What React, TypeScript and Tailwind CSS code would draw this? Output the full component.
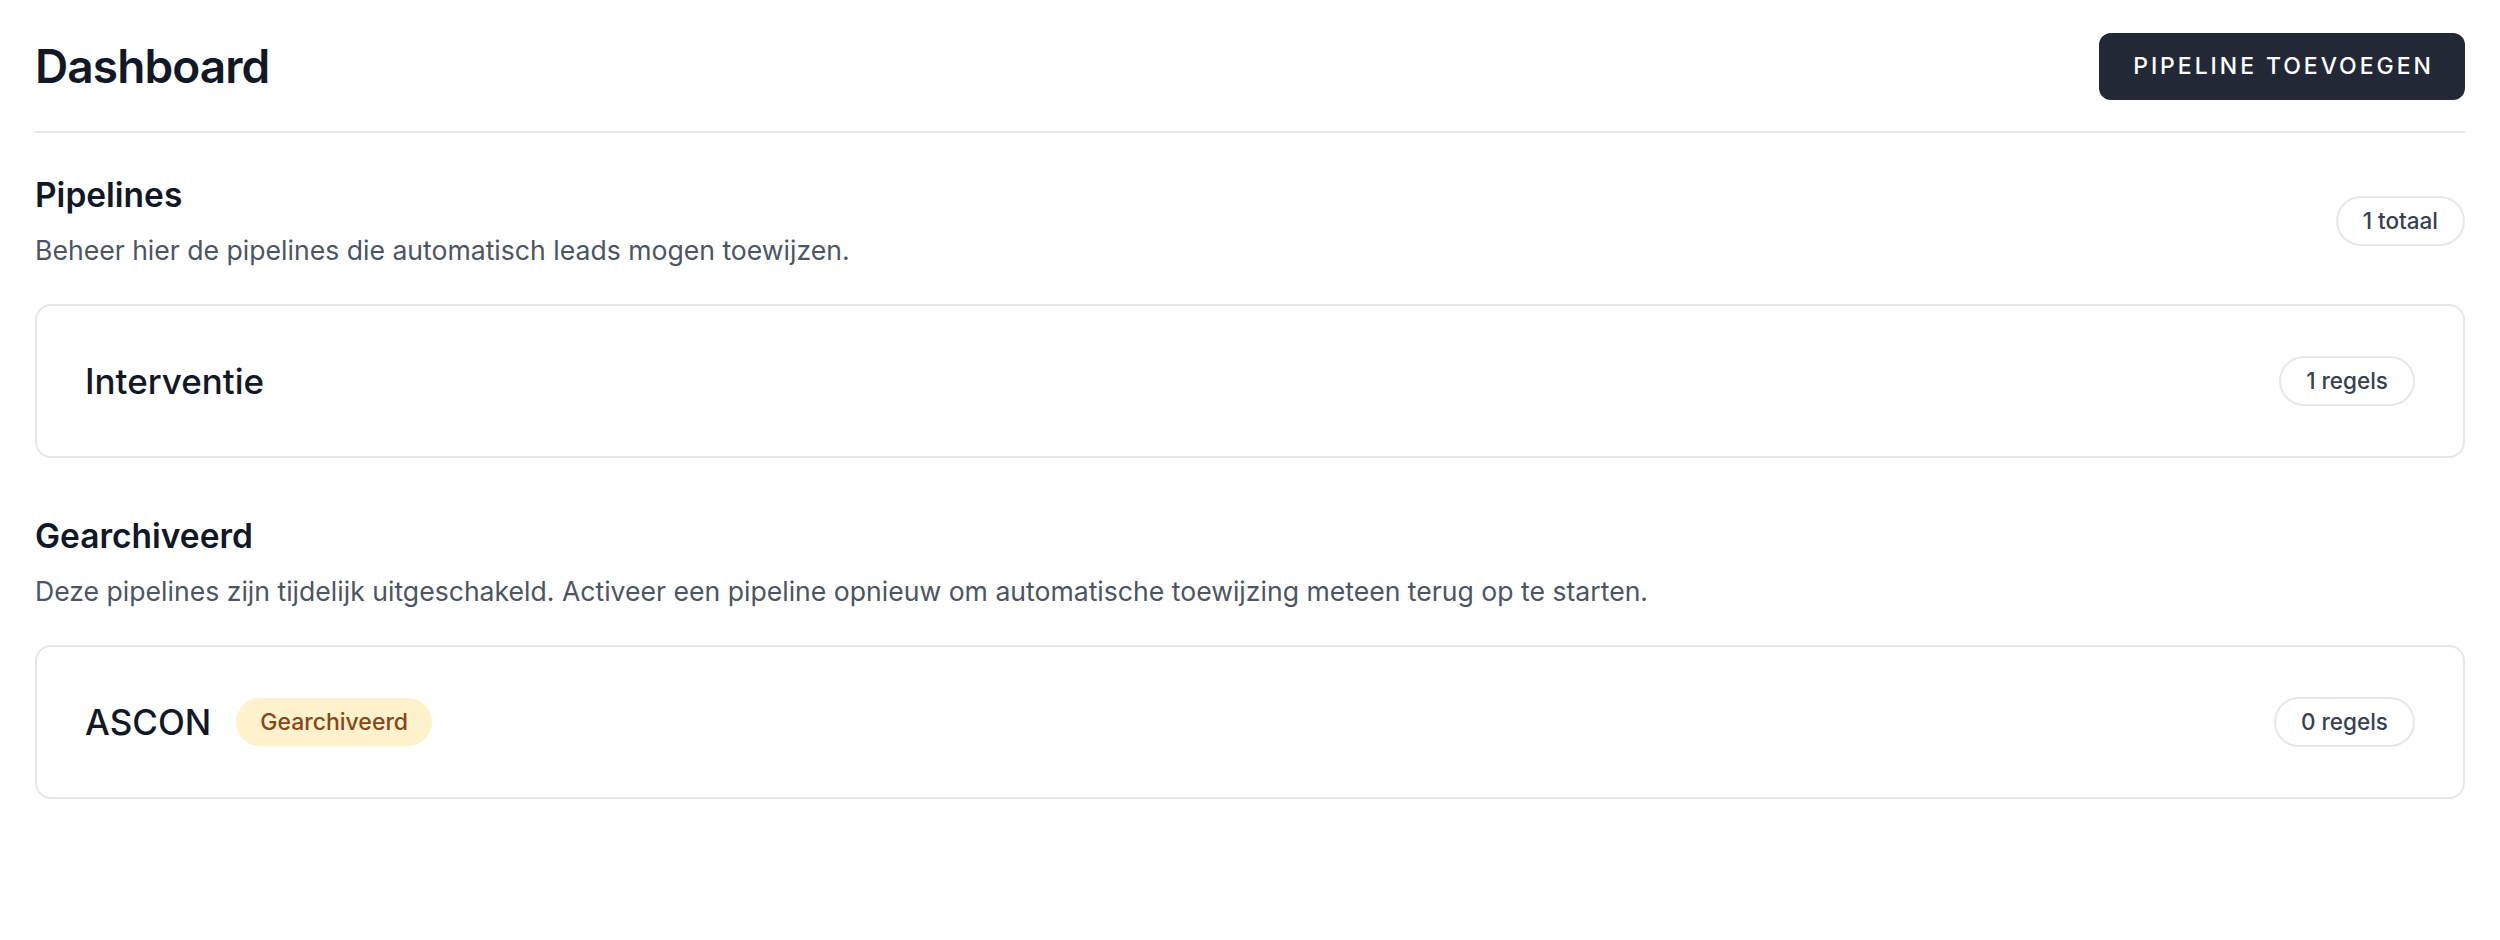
import React from "react";

function Pill({ children }: { children: React.ReactNode }) {
  return (
    <span className="inline-flex h-[50px] items-center rounded-full border-2 border-[#e5e7eb] bg-white px-[25px] text-[22.5px] font-medium text-[#374151]">
      {children}
    </span>
  );
}

function Card({ name, rules, archived }: { name: string; rules: string; archived?: boolean }) {
  return (
    <div className="flex items-center justify-between rounded-[16px] border-2 border-[#e5e7eb] bg-white px-[48px] py-[50px]">
      <div className="flex items-center gap-[25px]">
        <span className="text-[35px] font-medium leading-[44px] text-[#111827]">{name}</span>
        {archived && (
          <span className="inline-flex h-[48px] items-center rounded-full bg-[#fdf2cc] px-[24px] text-[23px] font-medium text-[#8a4516]">
            Gearchiveerd
          </span>
        )}
      </div>
      <Pill>{rules}</Pill>
    </div>
  );
}

export default function App() {
  return (
    <div className="min-h-screen bg-white px-[35px] pt-[33px] font-['Inter',sans-serif] text-[#111827]">
      <header className="flex items-center justify-between border-b-2 border-[#e5e7eb] pb-[31px]">
        <h1 className="text-[46px] font-semibold leading-[67px] tracking-[-0.02em]">Dashboard</h1>
        <button className="flex h-[67px] w-[366px] items-center justify-center rounded-[12px] bg-[#222836] pl-[3px] text-[23px] font-medium uppercase tracking-[0.128em] text-white">
          Pipeline toevoegen
        </button>
      </header>

      <section className="mt-[40px]">
        <div className="flex items-center justify-between">
          <div>
            <h2 className="text-[33.5px] font-semibold leading-[44px]">Pipelines</h2>
            <p className="mt-[14px] text-[26.6px] leading-[38px] text-[#4b5563]">
              Beheer hier de pipelines die automatisch leads mogen toewijzen.
            </p>
          </div>
          <Pill>1 totaal</Pill>
        </div>
        <div className="mt-[35px]">
          <Card name="Interventie" rules="1 regels" />
        </div>
      </section>

      <section className="mt-[56px]">
        <h2 className="text-[33.5px] font-semibold leading-[44px]">Gearchiveerd</h2>
        <p className="mt-[14px] text-[26.6px] leading-[38px] text-[#4b5563]">
          Deze pipelines zijn tijdelijk uitgeschakeld. Activeer een pipeline opnieuw om automatische toewijzing meteen terug op te starten.
        </p>
        <div className="mt-[35px]">
          <Card name="ASCON" rules="0 regels" archived />
        </div>
      </section>
    </div>
  );
}
